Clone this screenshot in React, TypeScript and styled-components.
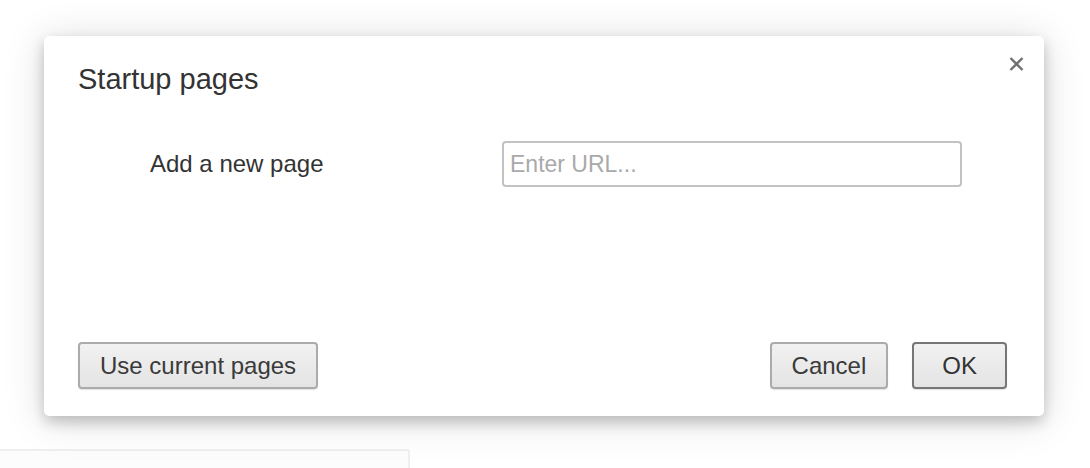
import styled, { createGlobalStyle } from 'styled-components';

const GlobalStyle = createGlobalStyle`
  html, body {
    margin: 0;
    padding: 0;
    background: #ffffff;
    font-family: "Liberation Sans", Arial, Helvetica, sans-serif;
    color: #333333;
  }
`;

const Page = styled.div`
  width: 1090px;
  height: 468px;
  overflow: hidden;
  padding: 36px 0 0 44px;
  box-sizing: border-box;
`;

const Dialog = styled.div`
  position: relative;
  width: 1000px;
  height: 380px;
  box-sizing: border-box;
  padding: 26px 37px 27px 34px;
  display: flex;
  flex-direction: column;
  background: #ffffff;
  border-radius: 5px;
  box-shadow: 0 6px 14px rgba(0, 0, 0, 0.2), 0 4px 40px rgba(0, 0, 0, 0.15);
  z-index: 2;
`;

const Title = styled.h1`
  margin: 0;
  font-size: 29px;
  line-height: 34px;
  font-weight: normal;
  color: #333333;
`;

const CloseButton = styled.button`
  position: absolute;
  top: 21px;
  right: 20px;
  width: 15px;
  height: 14px;
  padding: 0;
  border: none;
  background: none;
  display: flex;
  cursor: pointer;
`;

const Row = styled.div`
  display: flex;
  align-items: center;
  margin-top: 45px;
  padding-left: 72px;
`;

const Label = styled.label`
  width: 352px;
  font-size: 24px;
  line-height: 28px;
  color: #333333;
`;

const UrlInput = styled.input`
  width: 460px;
  height: 46px;
  box-sizing: border-box;
  border: 2px solid #c2c2c2;
  border-radius: 4px;
  padding: 0 6px;
  font-family: "Liberation Sans", Arial, sans-serif;
  font-size: 23px;
  color: #333333;
  outline: none;

  &::placeholder {
    color: #a9a9a9;
  }
`;

const Footer = styled.div`
  margin-top: auto;
  display: flex;
  align-items: center;
  gap: 24px;
`;

const Spacer = styled.div`
  flex: 1;
`;

const Button = styled.button<{ $default?: boolean }>`
  height: 47px;
  box-sizing: border-box;
  padding: 0 ${(p) => (p.$default ? 28 : 20)}px;
  border: 2px solid ${(p) => (p.$default ? '#767676' : '#ababab')};
  border-radius: 4px;
  background: linear-gradient(#f1f1f1, #e4e4e4);
  box-shadow: 0 1px 1px rgba(0, 0, 0, 0.12);
  font-family: "Liberation Sans", Arial, sans-serif;
  font-size: 24px;
  color: ${(p) => (p.$default ? '#333333' : '#3a3a3a')};
  cursor: pointer;
`;

const UnderCard = styled.div`
  margin: 33px 0 0 -48px;
  width: 410px;
  height: 40px;
  border: 2px solid #efefef;
  border-radius: 3px;
  background: #fcfcfc;
`;

const CloseIcon = () => (
  <svg width="15" height="14" viewBox="0 0 15 14">
    <path d="M1.5 1 L13.5 13 M13.5 1 L1.5 13" stroke="#6f6f6f" strokeWidth="2.4" fill="none" />
  </svg>
);

export default function App() {
  return (
    <>
      <GlobalStyle />
      <Page>
        <Dialog>
          <Title>Startup pages</Title>
          <CloseButton aria-label="Close">
            <CloseIcon />
          </CloseButton>
          <Row>
            <Label>Add a new page</Label>
            <UrlInput type="text" placeholder="Enter URL..." />
          </Row>
          <Footer>
            <Button>Use current pages</Button>
            <Spacer />
            <Button>Cancel</Button>
            <Button $default>OK</Button>
          </Footer>
        </Dialog>
        <UnderCard />
      </Page>
    </>
  );
}
